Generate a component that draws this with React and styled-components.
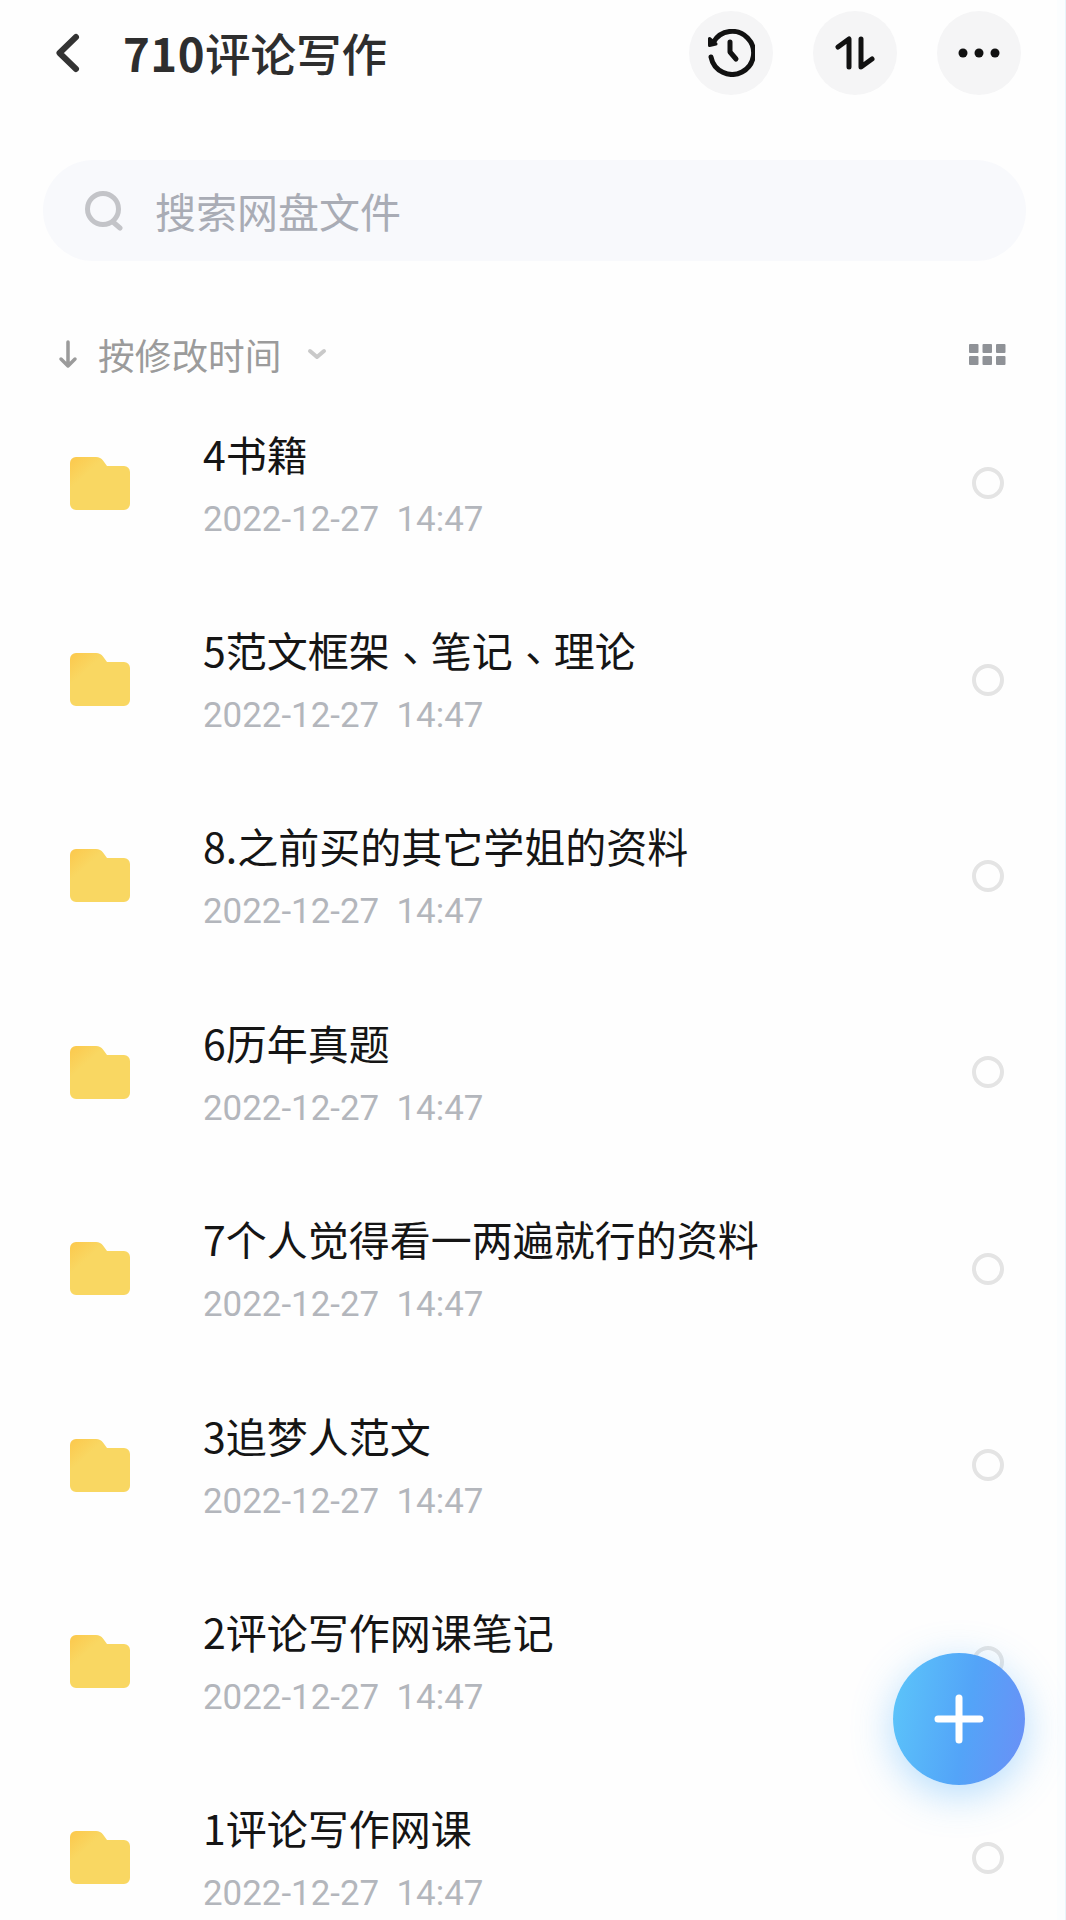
import React from "react";
import styled, { createGlobalStyle } from "styled-components";

const Global = createGlobalStyle`
  html, body { margin: 0; padding: 0; background: #fff; }
  body { font-family: Roboto, "Noto Sans CJK SC", sans-serif; }
  * { box-sizing: border-box; }
`;

const Page = styled.div`
  position: relative;
  width: 1066px;
  height: 1920px;
  overflow: hidden;
  padding-right: 8px;
  background: linear-gradient(to right, #fefefe calc(100% - 8px), #fbfdfe 0);
  border-right: 1px solid #e8f4fa;
`;

const Header = styled.header`
  display: flex;
  align-items: center;
  height: 104px;
  padding: 2px 0 0 53px;
`;

const BackButton = styled.span`
  display: flex;
  width: 30px;
  margin-right: 40px;
  color: #333;
`;

const Title = styled.h1`
  flex: 1;
  margin: 0;
  font: 500 45.5px/1 "Noto Sans CJK SC", sans-serif;
  color: #2e2e2e;
  white-space: nowrap;
`;

const TitleNumber = styled.span`
  font-weight: 700;
  letter-spacing: 0.5px;
`;

const Actions = styled.div`
  display: flex;
  gap: 40px;
  margin-right: 36px;
`;

const RoundButton = styled.span`
  display: flex;
  align-items: center;
  justify-content: center;
  width: 84px;
  height: 84px;
  border-radius: 50%;
  background: #f5f5f6;
  color: #111;
`;

const SearchBar = styled.div`
  display: flex;
  align-items: center;
  height: 101px;
  margin: 56px 31px 0 43px;
  padding-left: 42px;
  border-radius: 51px;
  background: #f8f9fc;
  color: #a9acb5;
  font: 400 41px/1 "Noto Sans CJK SC", sans-serif;
  gap: 32px;
`;

const SortRow = styled.div`
  display: flex;
  align-items: center;
  height: 44px;
  margin-top: 71px;
  margin-bottom: 9px;
  padding-left: 58px;
  color: #9b9b9b;
  font: 400 36.7px/1 "Noto Sans CJK SC", sans-serif;
`;

const SortLabel = styled.span`
  margin-left: 20px;
  margin-right: 26px;
`;

const GridIcon = styled.svg`
  margin-left: auto;
  margin-right: 51px;
`;

const List = styled.ul`
  margin: 0;
  padding: 0;
  list-style: none;
`;

const Row = styled.li`
  display: flex;
  align-items: center;
  height: 196.4px;
  padding-left: 70px;
`;

const FolderIcon = styled.svg`
  flex: none;
  margin-right: 73px;
`;

const Info = styled.div`
  flex: 1;
  min-width: 0;
`;

const Name = styled.div`
  font: 400 41px/60px "Noto Sans CJK SC", sans-serif;
  color: #151515;
  white-space: nowrap;
  margin-top: -2px;
`;

const Punct = styled.span`
  font-family: "Noto Sans CJK TC", sans-serif;
  line-height: 0;
  vertical-align: -7px;
`;

const Time = styled.div`
  margin-top: 15px;
  font: 400 34.9px/44px Roboto, sans-serif;
  color: #b3b6bc;
  white-space: pre;
`;

const Radio = styled.span`
  flex: none;
  width: 32px;
  height: 32px;
  margin-right: 53px;
  border: 4px solid #e4e4e4;
  border-radius: 50%;
`;

const Fab = styled.span`
  position: absolute;
  left: 893px;
  top: 1653px;
  display: flex;
  align-items: center;
  justify-content: center;
  width: 132px;
  height: 132px;
  border-radius: 50%;
  background: linear-gradient(100deg, #5cc6fa 0%, #53a4f8 55%, #6b8ff6 100%);
  box-shadow: 0 10px 40px rgba(90, 180, 250, 0.45);
`;

const items = [
  "4书籍",
  "5范文框架、笔记、理论",
  "8.之前买的其它学姐的资料",
  "6历年真题",
  "7个人觉得看一两遍就行的资料",
  "3追梦人范文",
  "2评论写作网课笔记",
  "1评论写作网课",
];

const Folder = () => (
  <FolderIcon width="60" height="53" viewBox="0 0 60 53" aria-hidden="true">
    <defs>
      <linearGradient id="folderFill" x1="0" y1="0" x2="0.3" y2="0.3">
        <stop offset="0" stopColor="#fcc84c" />
        <stop offset="1" stopColor="#f9d762" />
      </linearGradient>
    </defs>
    <path
      d="M0 6a6 6 0 0 1 6-6h20c3 0 5.500 1.500 7 3.500L37 9h17a6 6 0 0 1 6 6v32a6 6 0 0 1-6 6H6a6 6 0 0 1-6-6z"
      fill="url(#folderFill)"
    />
  </FolderIcon>
);

const renderName = (name) =>
  name.split(/(、)/).map((part, i) => (part === "、" ? <Punct key={i}>{part}</Punct> : part));

export default function App() {
  return (
    <Page>
      <Global />
      <Header>
        <BackButton>
          <svg width="30" height="44" viewBox="0 0 30 44" fill="none" stroke="currentColor" strokeWidth="6" strokeLinecap="round" strokeLinejoin="round">
            <path d="M23 6 6.500 22 23 38" />
          </svg>
        </BackButton>
        <Title>
          <TitleNumber>710</TitleNumber>评论写作
        </Title>
        <Actions>
          <RoundButton>
            <svg width="48" height="48" viewBox="0 0 48 48" fill="none" stroke="currentColor" strokeWidth="5" strokeLinecap="round" strokeLinejoin="round">
              <path d="M6.400 13.300A21.500 21.500 0 1 1 4 28" />
              <path d="M2.500 9.500v7l6.500-1.500z" fill="currentColor" strokeWidth="3" />
              <path d="M23 13v10l6 7" />
            </svg>
          </RoundButton>
          <RoundButton>
            <svg width="40" height="34" viewBox="0 0 40 34" fill="none" stroke="currentColor" strokeWidth="5" strokeLinecap="round" strokeLinejoin="round">
              <path d="M3 11 14 3v28" />
              <path d="M26 3v28l11-8" />
            </svg>
          </RoundButton>
          <RoundButton>
            <svg width="42" height="10" viewBox="0 0 42 10" fill="currentColor">
              <circle cx="5" cy="5" r="4.500" />
              <circle cx="21" cy="5" r="4.500" />
              <circle cx="37" cy="5" r="4.500" />
            </svg>
          </RoundButton>
        </Actions>
      </Header>
      <SearchBar>
        <svg width="38" height="40" viewBox="0 0 38 40" fill="none" stroke="#c3c4c8" strokeWidth="5" strokeLinecap="round">
          <circle cx="18" cy="18" r="15.500" />
          <path d="M28 31l7 6" />
        </svg>
        <span>搜索网盘文件</span>
      </SearchBar>
      <SortRow>
        <svg width="20" height="30" viewBox="0 0 20 30" fill="none" stroke="#9b9b9b" strokeWidth="3.500" strokeLinecap="round" strokeLinejoin="round">
          <path d="M10 3v24M3 20l7 7 7-7" />
        </svg>
        <SortLabel>按修改时间</SortLabel>
        <svg width="20" height="12" viewBox="0 0 20 12" fill="none" stroke="#c9c9c9" strokeWidth="4" strokeLinecap="round" strokeLinejoin="round">
          <path d="M3 3l7 6 7-6" />
        </svg>
        <GridIcon width="37" height="21" viewBox="0 0 37 21" fill="#8f9297">
          {[0, 13.5, 27].flatMap((x) =>
            [0, 12].map((y) => <rect key={`${x}-${y}`} x={x} y={y} width="9.500" height="9" rx="1" />)
          )}
        </GridIcon>
      </SortRow>
      <List>
        {items.map((name) => (
          <Row key={name}>
            <Folder />
            <Info>
              <Name>{renderName(name)}</Name>
              <Time>{"2022-12-27  14:47"}</Time>
            </Info>
            <Radio />
          </Row>
        ))}
      </List>
      <Fab>
        <svg width="50" height="50" viewBox="0 0 50 50" fill="none" stroke="#fff" strokeWidth="7" strokeLinecap="round">
          <path d="M25 4v42M4 25h42" />
        </svg>
      </Fab>
    </Page>
  );
}
